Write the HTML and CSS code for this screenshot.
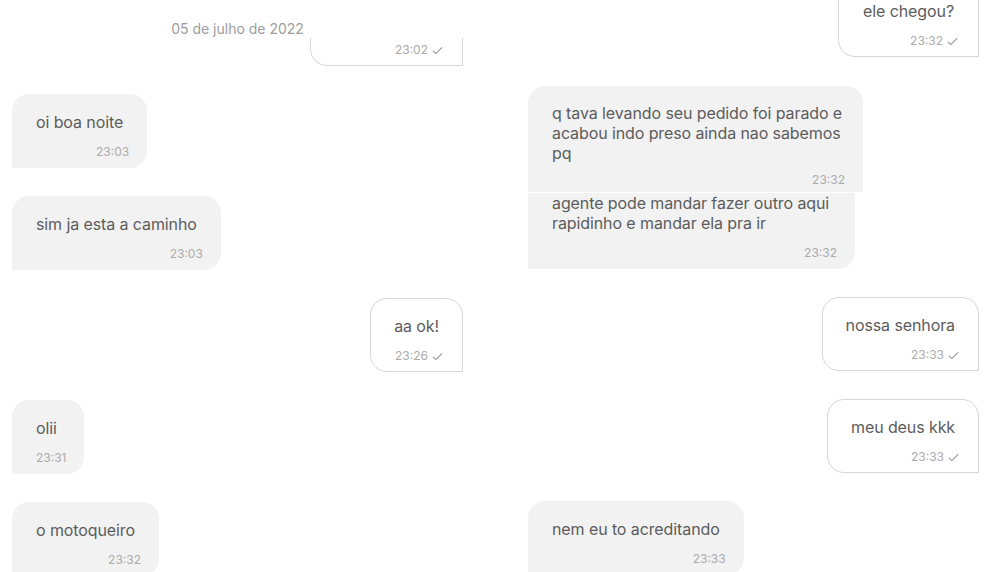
FILE: index.html
```html
<!DOCTYPE html>
<html lang="pt-BR">
<head>
    <meta charset="UTF-8">
    <meta name="viewport" content="width=device-width, initial-scale=1.0">
    <title>Conversa</title>
    <link rel="stylesheet" href="styles.css">
</head>
<body>

    <div class="board">

        <!-- primeira conversa -->
        <div class="chat chat-left">
            <p class="date">05 de julho de 2022</p>

            <div class="msg sent cut-top">
                <span class="time">23:02 <svg class="check" viewBox="0 0 12 9"><path d="M1 4.8 L4.2 7.8 L11 1"/></svg></span>
            </div>

            <div class="msg received">
                <p class="text">oi boa noite</p>
                <span class="time">23:03</span>
            </div>

            <div class="msg received">
                <p class="text">sim ja esta a caminho</p>
                <span class="time">23:03</span>
            </div>

            <div class="msg sent">
                <p class="text">aa ok!</p>
                <span class="time">23:26 <svg class="check" viewBox="0 0 12 9"><path d="M1 4.8 L4.2 7.8 L11 1"/></svg></span>
            </div>

            <div class="msg received">
                <p class="text">olii</p>
                <span class="time">23:31</span>
            </div>

            <div class="msg received">
                <p class="text">o motoqueiro</p>
                <span class="time">23:32</span>
            </div>
        </div>

        <!-- segunda conversa -->
        <div class="chat chat-right">
            <div class="msg sent pull-up">
                <p class="text">ele chegou?</p>
                <span class="time">23:32 <svg class="check" viewBox="0 0 12 9"><path d="M1 4.8 L4.2 7.8 L11 1"/></svg></span>
            </div>

            <div class="stack">
                <div class="msg received long cut-bottom">
                    <p class="text">q tava levando seu pedido foi parado e acabou indo preso ainda nao sabemos pq</p>
                    <span class="time">23:32</span>
                </div>
                <div class="msg received long under">
                    <p class="text">agente pode mandar fazer outro aqui rapidinho e mandar ela pra ir</p>
                    <span class="time">23:32</span>
                </div>
            </div>

            <div class="msg sent">
                <p class="text">nossa senhora</p>
                <span class="time">23:33 <svg class="check" viewBox="0 0 12 9"><path d="M1 4.8 L4.2 7.8 L11 1"/></svg></span>
            </div>

            <div class="msg sent">
                <p class="text">meu deus kkk</p>
                <span class="time">23:33 <svg class="check" viewBox="0 0 12 9"><path d="M1 4.8 L4.2 7.8 L11 1"/></svg></span>
            </div>

            <div class="msg received">
                <p class="text">nem eu to acreditando</p>
                <span class="time">23:33</span>
            </div>
        </div>

    </div>

</body>
</html>
```

FILE: styles.css
```css
body {
    margin: 0;
    background-color: #ffffff;
    font-family: 'Inter', 'Noto Sans', sans-serif;
    color: #5c5c5c;
    overflow: hidden;
}
.board {
    display: flex;
    gap: 65px;
    padding-left: 12px;
    height: 572px;
    overflow: hidden;
}
.chat {
    width: 451px;
    display: flex;
    flex-direction: column;
    gap: 28px;
}
.date {
    margin: 20px 0 0;
    text-align: center;
    font-size: 14px;
    line-height: 18px;
    color: #9d9d9d;
}
.msg {
    box-sizing: border-box;
    max-width: 340px;
    padding: 18px 18px 9px 24px;
    display: flex;
    flex-direction: column;
}
.msg .text {
    margin: 0;
    font-size: 16px;
    line-height: 20px;
    padding-right: 6px;
    letter-spacing: -0.1px;
}
.msg .time {
    margin-top: 13px;
    align-self: flex-end;
    font-size: 12px;
    line-height: 14px;
    color: #ababab;
    display: flex;
    align-items: center;
    gap: 4px;
}
.check {
    width: 11px;
    height: 9px;
    fill: none;
    stroke: #8f8f8f;
    stroke-width: 1.1;
}
.received {
    align-self: flex-start;
    background-color: #f2f2f2;
    border-radius: 17px 17px 17px 0;
}
.sent {
    align-self: flex-end;
    background-color: #ffffff;
    border: 1px solid #d6d6d6;
    border-radius: 17px 17px 0 17px;
    padding-right: 19px;
    padding-left: 23px;
    padding-top: 17px;
    padding-bottom: 8px;
}
.sent .text {
    padding-right: 4px;
}
.cut-top {
    margin-top: -28px;
    width: 153px;
    border-top: none;
    border-radius: 0 0 0 17px;
    padding-top: 0;
}
.cut-top .time {
    margin-top: 5px;
}
.pull-up {
    margin-top: -17px;
    margin-bottom: 1px;
    padding-left: 24px;
    padding-right: 20px;
}
.stack {
    display: flex;
    flex-direction: column;
    gap: 1px;
}
.long {
    width: 335px;
    max-width: none;
}
.long .text {
    padding-right: 0;
}
.cut-bottom {
    border-radius: 17px 17px 0 0;
    height: 106px;
    padding-top: 17px;
    padding-bottom: 3px;
}
.cut-bottom .time {
    margin-top: 10px;
}
.under {
    width: 327px;
    border-radius: 0 0 17px 0;
    padding-top: 0;
}
```
